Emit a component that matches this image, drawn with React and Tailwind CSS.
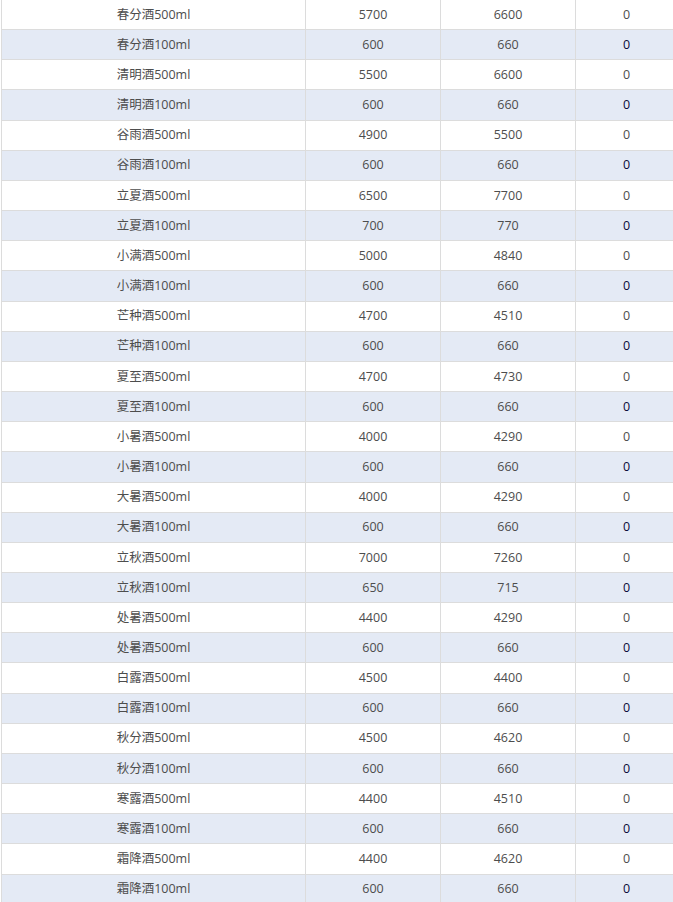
const rows = [
  ["春分酒500ml", "5700", "6600", "0"],
  ["春分酒100ml", "600", "660", "0"],
  ["清明酒500ml", "5500", "6600", "0"],
  ["清明酒100ml", "600", "660", "0"],
  ["谷雨酒500ml", "4900", "5500", "0"],
  ["谷雨酒100ml", "600", "660", "0"],
  ["立夏酒500ml", "6500", "7700", "0"],
  ["立夏酒100ml", "700", "770", "0"],
  ["小满酒500ml", "5000", "4840", "0"],
  ["小满酒100ml", "600", "660", "0"],
  ["芒种酒500ml", "4700", "4510", "0"],
  ["芒种酒100ml", "600", "660", "0"],
  ["夏至酒500ml", "4700", "4730", "0"],
  ["夏至酒100ml", "600", "660", "0"],
  ["小暑酒500ml", "4000", "4290", "0"],
  ["小暑酒100ml", "600", "660", "0"],
  ["大暑酒500ml", "4000", "4290", "0"],
  ["大暑酒100ml", "600", "660", "0"],
  ["立秋酒500ml", "7000", "7260", "0"],
  ["立秋酒100ml", "650", "715", "0"],
  ["处暑酒500ml", "4400", "4290", "0"],
  ["处暑酒500ml", "600", "660", "0"],
  ["白露酒500ml", "4500", "4400", "0"],
  ["白露酒100ml", "600", "660", "0"],
  ["秋分酒500ml", "4500", "4620", "0"],
  ["秋分酒100ml", "600", "660", "0"],
  ["寒露酒500ml", "4400", "4510", "0"],
  ["寒露酒100ml", "600", "660", "0"],
  ["霜降酒500ml", "4400", "4620", "0"],
  ["霜降酒100ml", "600", "660", "0"],
];

export default function App() {
  return (
    <div
      className="w-[673px] h-[902px] overflow-hidden bg-white text-[12.5px] text-[#4d4d4d]"
      style={{ fontFamily: '"Open Sans", "Noto Sans CJK SC", sans-serif' }}
    >
      <div className="w-[680px] border-l border-[#dcdcdc] ml-px">
        {rows.map((r, i) => {
          const alt = i % 2 === 1;
          return (
            <div
              key={i}
              className={`grid grid-cols-[304px_135px_135px_1fr] h-[30.17px] border-b border-[#dcdcdc] ${alt ? "bg-[#e4eaf5]" : "bg-white"}`}
            >
              <div className="flex items-center justify-center pt-px border-r border-[#dcdcdc]">{r[0]}</div>
              <div className="flex items-center justify-center pt-px border-r border-[#dcdcdc]">{r[1]}</div>
              <div className="flex items-center justify-center pt-px border-r border-[#dcdcdc]">{r[2]}</div>
              <div className={`flex items-center justify-center pt-px pr-[4px] ${alt ? "text-[#0a0a3a]" : "text-[#4d4d4d]"}`}>{r[3]}</div>
            </div>
          );
        })}
      </div>
    </div>
  );
}
